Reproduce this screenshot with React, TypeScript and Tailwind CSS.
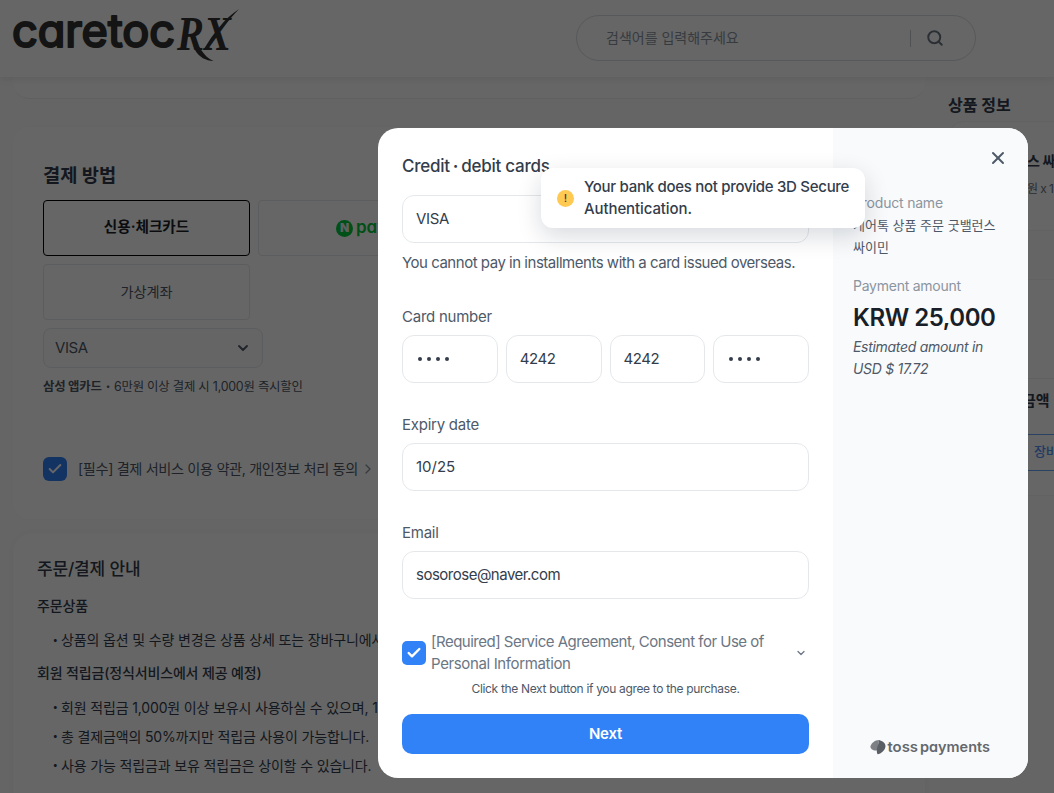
import { useState } from "react";
import { Check, ChevronDown, ChevronRight, Search, X } from "lucide-react";

const Logo = () => (
  <svg width="240" height="64" viewBox="0 0 240 64" className="block text-[#333333]">
    <text
      x="12"
      y="46.500"
      fontSize="45"
      textLength="163"
      lengthAdjust="spacingAndGlyphs"
      fill="currentColor"
      stroke="currentColor"
      strokeWidth="2.200"
      strokeLinejoin="round"
      className="font-['Inter','Lato',sans-serif] font-normal [font-feature-settings:'cv11']"
    >
      caretoc
    </text>
    <text
      x="177"
      y="50"
      fontSize="49"
      textLength="54"
      lengthAdjust="spacingAndGlyphs"
      fill="currentColor"
      className="font-['Liberation_Serif',serif] font-bold italic"
    >
      RX
    </text>
    {/* swashes on the R leg and the X arm */}
    <path d="M192 36 C198 43 203 57 213.500 61 C206 61 199 57 195 50 Z" fill="currentColor" />
    <path d="M204 49 C213 34 224 19 239 9 C227 22 217 34 205 50 Z" fill="currentColor" />
  </svg>
);

const Header = () => (
  <header className="relative z-10 flex h-[77px] justify-between bg-white pr-[78px] shadow-[0_2px_8px_rgba(0,0,0,0.08)]">
    <Logo />
    <div className="mt-[15px] flex h-[46px] w-[400px] items-center rounded-full border border-[#d9dde1] pl-[29px]">
      <span className="flex-1 pb-0.5 text-[14px] text-[#8b95a1]">검색어를 입력해주세요</span>
      <span className="h-[17px] w-px bg-[#c5cad0]" />
      <Search className="mr-[31px] mb-px ml-[15px] h-[18px] w-[18px] text-[#6b7684]" strokeWidth={2.6} />
    </div>
  </header>
);

const PaymentMethods = () => (
  <section className="mt-7 h-[392px] rounded-2xl bg-white px-[30px] pt-[35px] text-[#4e5968] shadow-[0_0_4px_rgba(0,0,0,0.01)]">
    <h2 className="text-[18.700px] leading-7 font-bold text-[#333d4b]">결제 방법</h2>
    <div className="mt-2.5 grid w-[422px] grid-cols-2 gap-2 text-[14.200px]">
      <div className="flex h-14 items-center justify-center rounded border border-black text-[14.600px] font-bold text-[#191f28]">
        신용·체크카드
      </div>
      <div className="flex h-14 items-center rounded border border-[#e5e8eb] pl-[77px]">
        <span className="flex h-[17px] w-[17px] items-center justify-center rounded-full bg-[#00c73c] font-['Inter'] text-[12px] font-black text-[#f0f0f0]">
          N
        </span>
        <span className="ml-[3px] pb-0.5 font-['Inter'] text-[17px] leading-none font-semibold text-[#00c73c] [font-feature-settings:'cv11']">
          pay
        </span>
      </div>
      <div className="flex h-14 items-center justify-center rounded border border-[#e5e8eb]">
        가상계좌
      </div>
    </div>
    <div className="mt-2 flex h-10 w-[220px] items-center justify-between rounded-lg border border-[#e5e8eb] bg-[#fdfdfd] pr-[11px] pl-[11px] text-[15px] tracking-[-0.4px]">
      VISA
      <ChevronDown className="h-4 w-4 text-[#4e5968]" strokeWidth={2.8} />
    </div>
    <p className="mt-[9px] text-[12.400px] leading-5 tracking-[-0.22px]">
      <span className="font-bold">삼성 앱카드</span>
      <span className="mx-1 font-black">·</span>6만원 이상 결제 시 1,000원 즉시할인
    </p>
    <div className="mt-[60px] flex items-center">
      <span className="flex h-6 w-6 items-center justify-center rounded-md bg-[#3182f6] text-white">
        <Check className="h-4 w-4" strokeWidth={3} />
      </span>
      <span className="ml-[11px] text-[14.200px] tracking-[-0.36px]">
        [필수] 결제 서비스 이용 약관, 개인정보 처리 동의
      </span>
      <ChevronRight className="ml-0.5 h-4 w-4 text-[#8b95a1]" strokeWidth={2} />
    </div>
  </section>
);

const GuideItem = ({ children }: { children: string }) => (
  <li className="flex">
    <span className="w-2 -indent-0.5 font-['Noto_Sans_CJK_KR'] font-black">·</span>
    {children}
  </li>
);

const Guide = () => (
  <section className="mt-3.5 h-[300px] rounded-[20px] bg-white px-6 pt-[22px] text-[14px] tracking-[-0.15px] text-[#333d4b] shadow-[0_0_6px_rgba(0,0,0,0.04)]">
    <h2 className="text-[17px] leading-7 font-medium">주문/결제 안내</h2>
    <h3 className="mt-[11px] leading-6 font-medium">주문상품</h3>
    <ul className="mt-2.5 pl-4 leading-6">
      <GuideItem>상품의 옵션 및 수량 변경은 상품 상세 또는 장바구니에서 가능합니다.</GuideItem>
    </ul>
    <h3 className="mt-[9px] leading-6 font-medium">회원 적립금(정식서비스에서 제공 예정)</h3>
    <ul className="mt-2 pl-4 leading-[29px]">
      <GuideItem>회원 적립금 1,000원 이상 보유시 사용하실 수 있으며, 100원 단위로 가능합니다.</GuideItem>
      <GuideItem>총 결제금액의 50%까지만 적립금 사용이 가능합니다.</GuideItem>
      <GuideItem>사용 가능 적립금과 보유 적립금은 상이할 수 있습니다.</GuideItem>
    </ul>
  </section>
);

const Summary = () => (
  <aside className="w-[300px] shrink-0 pt-4 text-[#333d4b]">
    <h2 className="text-[16px] leading-6 font-bold">상품 정보</h2>
    <div className="mt-1 h-[110px] rounded-2xl border border-[#f4f4f4] bg-white pt-[27px] pl-[78px]">
      <p className="text-[14px] leading-6 font-bold tracking-[-0.3px]">스 싸이민</p>
      <p className="mt-1 text-[12px] leading-6 tracking-[-0.6px] text-[#6b7684]">원 x 1</p>
    </div>
    <div className="mt-12 h-[217px] rounded-2xl border border-[#f4f4f4] bg-white">
      <div className="mt-[98px] flex h-[46px] items-center border-t border-[#f0f0f0] pl-[73px] text-[15px] font-bold">
        금액
      </div>
      <div className="mt-2.5 flex h-[37px] items-center border border-[#6aa5f5] pb-px pl-[84px] text-[13px] font-medium text-[#4f95f7]">
        장바구니
      </div>
    </div>
  </aside>
);

const Field = ({ value, className = "" }: { value: string; className?: string }) => (
  <div
    className={`flex h-12 items-center rounded-xl border border-[#e5e8eb] px-[13px] text-[15px] text-[#333d4b] ${className}`}
  >
    {value}
  </div>
);

const Dots = () => (
  <div className="flex h-12 items-center gap-[5px] rounded-xl border border-[#e5e8eb] px-[15px]">
    {[0, 1, 2, 3].map((i) => (
      <span key={i} className="h-1 w-1 rounded-full bg-[#333d4b]" />
    ))}
  </div>
);

const Label = ({ children }: { children: string }) => (
  <p className="mt-[31px] mb-[7px] text-[15px] leading-[22px] tracking-[-0.25px] text-[#4e5968]">
    {children}
  </p>
);

const Toast = () => (
  <div className="absolute top-10 left-[163px] flex h-[60px] w-[324px] items-center rounded-xl bg-white pl-4 shadow-[0_8px_24px_rgba(0,23,51,0.16)]">
    <span className="flex h-[17px] w-[17px] items-center justify-center rounded-full bg-[#ffc952] text-[11px] font-medium text-[#333d4b]">
      !
    </span>
    <p className="ml-2.5 text-[15px] leading-[22px] font-medium tracking-[-0.29px] text-[#333d4b]">
      Your bank does not provide 3D Secure
      <br />
      <span className="tracking-[-0.1px]">Authentication.</span>
    </p>
  </div>
);

const TossLogo = () => (
  <svg width="122" height="20" viewBox="0 0 122 20" className="block">
    <path d="M9 2 C5 2 1.500 5 0.500 8 C0 10 2 12 4.500 12.500 L8 12.500 Z" fill="#7d8085" />
    <path d="M9 2 C9.500 5 7 8 7 11 C6.500 13 7 15 7.500 16.200 C11 16 15.500 12 15.500 8 C15.500 5 12.500 3 9 2 Z" fill="#5a5e65" />
    <text
      y="14"
      fontSize="14"
      fill="#64686e"
      className="font-['Inter',sans-serif] font-semibold [font-feature-settings:'cv11']"
    >
      <tspan x="17.500" textLength="30.500" lengthAdjust="spacingAndGlyphs">toss</tspan>
      <tspan x="50" textLength="70" lengthAdjust="spacingAndGlyphs">payments</tspan>
    </text>
  </svg>
);

const PaymentModal = ({ onClose }: { onClose: () => void }) => (
  <div className="absolute top-32 left-[378px] flex h-[650px] w-[650px] overflow-hidden rounded-[20px] bg-white font-['Inter','Noto_Sans_CJK_KR',sans-serif]">
    <div className="w-[455px] px-6 pt-[26px]">
      <h1 className="mb-[17px] text-[17px] leading-6 font-medium tracking-[-0.25px] text-[#333d4b]">
        Credit<span className="mx-[3px] font-bold">·</span>debit cards
      </h1>
      <Field value="VISA" className="tracking-[-0.3px]" />
      <p className="mt-[9px] mb-8 text-[15px] leading-[22px] tracking-[-0.48px] whitespace-nowrap text-[#4e5968]">
        You cannot pay in installments with a card issued overseas.
      </p>
      <Label>Card number</Label>
      <div className="grid grid-cols-4 gap-2">
        <Dots />
        <Field value="4242" className="tracking-[-0.4px]" />
        <Field value="4242" className="tracking-[-0.4px]" />
        <Dots />
      </div>
      <Label>Expiry date</Label>
      <Field value="10/25" />
      <Label>Email</Label>
      <Field value="sosorose@naver.com" className="tracking-[-0.5px]" />
      <div className="mt-8 flex items-center">
        <span className="flex h-6 w-6 shrink-0 items-center justify-center rounded-[5px] bg-[#3182f6] text-white">
          <Check className="h-4 w-4" strokeWidth={3.6} />
        </span>
        <p className="ml-[5px] flex-1 text-[15px] leading-[22px] tracking-[-0.5px] whitespace-nowrap text-[#6b7684]">
          [Required] Service Agreement, Consent for Use of
          <br />
          <span className="tracking-[-0.36px]">Personal Information</span>
        </p>
        <ChevronDown className="mr-0.5 h-3 w-3 text-[#6b7684]" strokeWidth={2.5} />
      </div>
      <p className="mt-[5px] text-center text-[12px] leading-[18px] tracking-[-0.33px] text-[#4e5968]">
        Click the Next button if you agree to the purchase.
      </p>
      <button className="mt-4 h-10 w-full rounded-[10px] bg-[#3182f6] text-[15px] font-semibold tracking-[-0.2px] text-white">
        Next
      </button>
    </div>

    <div className="flex flex-1 flex-col bg-[#f9fafb] pt-5 pl-5 text-[14px] leading-[22px] whitespace-nowrap text-[#4e5968]">
      <button onClick={onClose} className="mr-5 self-end">
        <X className="h-5 w-5 text-[#4e5968]" strokeWidth={2.4} />
      </button>
      <p className="mt-6 tracking-[-0.2px] text-[#8b95a1]">Product name</p>
      <p className="text-[13px]">
        케어톡 상품 주문 굿밸런스
        <br />
        싸이민
      </p>
      <p className="mt-[17px] tracking-[-0.25px] text-[#8b95a1]">Payment amount</p>
      <p className="mt-[5px] text-[24px] leading-8 font-semibold tracking-[-0.45px] text-[#191f28]">
        KRW 25,000
      </p>
      <p className="mt-0.5 tracking-[-0.3px] italic">
        Estimated amount in
        <br />
        USD $ 17.72
      </p>
      <div className="mt-auto mb-5 ml-[17px]">
        <TossLogo />
      </div>
    </div>
    <Toast />
  </div>
);

export default function App() {
  const [open, setOpen] = useState(true);

  return (
    <div className="relative h-[793px] w-[1054px] overflow-hidden bg-[#fcfcfc] font-['Inter','Noto_Sans_CJK_KR',sans-serif] whitespace-nowrap">
      <Header />
      <main className="flex gap-[23px] pl-[13px]">
        <div className="w-[912px] shrink-0">
          <div className="h-[22px] rounded-b-2xl border-b border-[#f0f0f0] bg-white" />
          <PaymentMethods />
          <Guide />
        </div>
        <Summary />
      </main>
      {open && (
        <div className="absolute inset-0 z-20 bg-black/60">
          <PaymentModal onClose={() => setOpen(false)} />
        </div>
      )}
    </div>
  );
}
